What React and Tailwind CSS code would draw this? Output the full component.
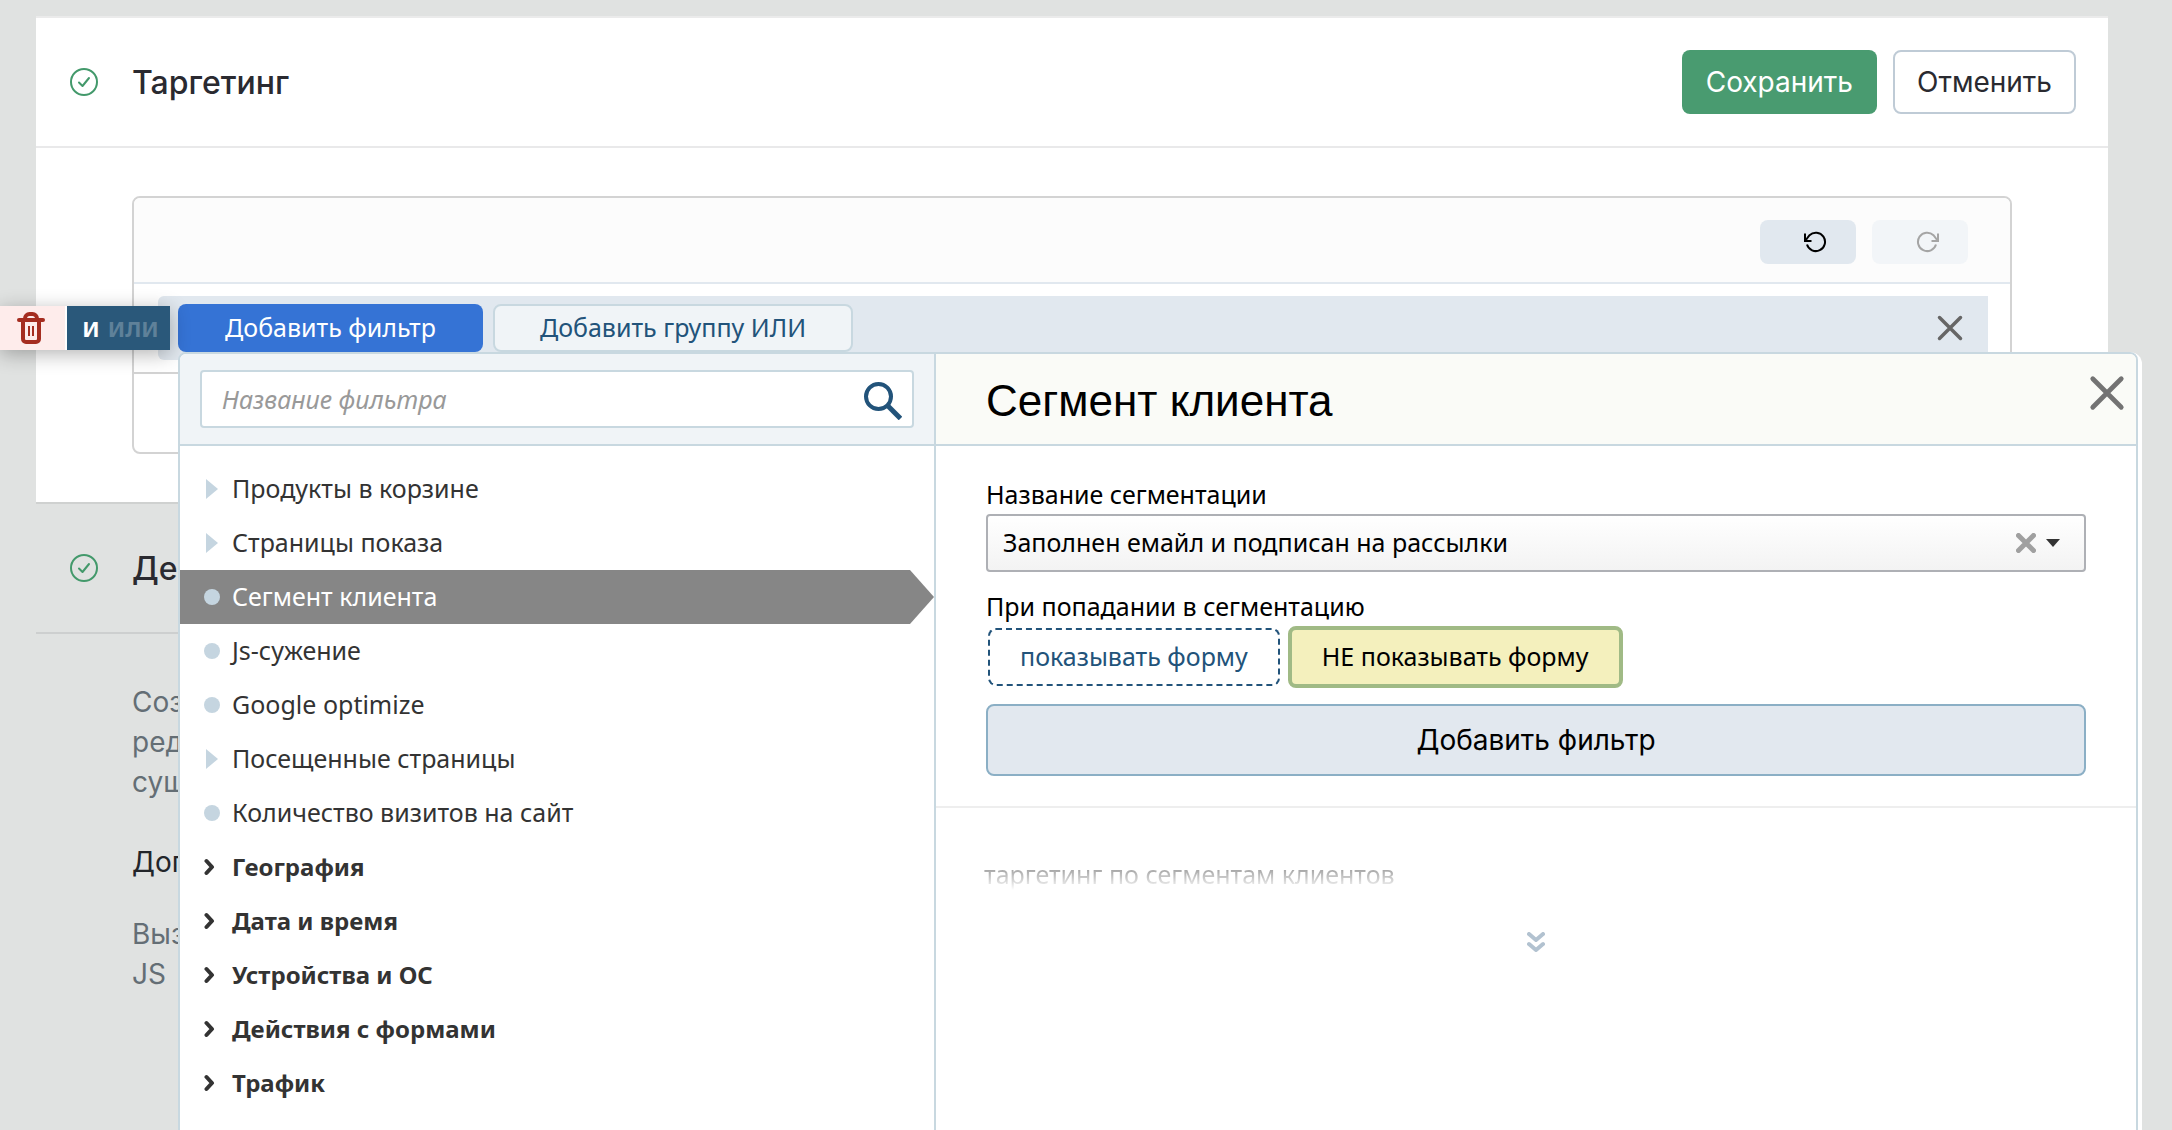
import React from "react";

const filters = [
  { name: "Продукты в корзине", type: "branch" },
  { name: "Страницы показа", type: "branch" },
  { name: "Сегмент клиента", type: "leaf", active: true },
  { name: "Js-сужение", type: "leaf" },
  { name: "Google optimize", type: "leaf" },
  { name: "Посещенные страницы", type: "branch" },
  { name: "Количество визитов на сайт", type: "leaf" },
  { name: "География", type: "group" },
  { name: "Дата и время", type: "group" },
  { name: "Устройства и ОС", type: "group" },
  { name: "Действия с формами", type: "group" },
  { name: "Трафик", type: "group" },
];

const CheckIcon = () => (
  <svg width="28" height="28" viewBox="0 0 28 28" fill="none" stroke="#43996b" strokeWidth="2" strokeLinecap="round" strokeLinejoin="round">
    <circle cx="14" cy="14" r="13" />
    <path d="M9 14.500l3.500 3.500L19 10" />
  </svg>
);

const TrashIcon = () => (
  <svg width="28" height="32" viewBox="0 0 28 32" fill="none" stroke="#a52d20" strokeWidth="4" strokeLinejoin="round">
    <path d="M8 8V6.500A4.500 4.500 0 0 1 12.500 2h3A4.500 4.500 0 0 1 20 6.500V8" />
    <path d="M2 8h24" strokeLinecap="round" />
    <path d="M6 8v19a3 3 0 0 0 3 3h10a3 3 0 0 0 3-3V8" />
    <path d="M12 14v10M16 14v10" strokeWidth="2" />
  </svg>
);

const UndoIcon = () => (
  <svg width="23" height="22" viewBox="0 0 23 22" fill="none" stroke="currentColor" strokeWidth="2">
    <path d="M3 13.500A9.200 9.200 0 1 0 5.500 4.200L1.500 9.500" />
    <path d="M1 2.500v7.500h6.500" />
  </svg>
);

const SearchIcon = () => (
  <svg width="38" height="38" viewBox="0 0 38 38" fill="none" stroke="#22537a" strokeWidth="4">
    <circle cx="14.500" cy="14.500" r="12.500" />
    <path d="M24 24l12.500 12.500" strokeWidth="5" />
  </svg>
);

const CloseIcon = ({ size, width }) => (
  <svg width={size} height={size} viewBox="0 0 24 24" fill="none" stroke="currentColor" strokeWidth={width} strokeLinecap="round">
    <path d="M3 3l18 18M21 3L3 21" />
  </svg>
);

const Marker = ({ type }) => {
  if (type === "branch") {
    return (
      <svg width="16" height="20" viewBox="0 0 16 20" fill="#c5d5e0">
        <path d="M2 0l12 10L2 20z" />
      </svg>
    );
  }
  if (type === "leaf") {
    return <span className="size-4 rounded-full bg-[#c5d5e0]" />;
  }
  return (
    <svg width="16" height="18" viewBox="0 0 16 18" fill="none" stroke="#333333" strokeWidth="4" strokeLinecap="round" strokeLinejoin="round">
      <path d="M2.500 3L8 9l-5.500 6" />
    </svg>
  );
};

const FilterList = () => (
  <ul className="pt-4 pb-10 text-[#333333]">
    {filters.map((f) => (
      <li key={f.name}>
        <button
          type="button"
          className={
            f.active
              ? "flex h-[54px] w-full items-center gap-3 bg-[#868686] pl-6 text-white [clip-path:polygon(0_0,calc(100%-24px)_0,100%_50%,calc(100%-24px)_100%,0_100%)]"
              : "flex h-[54px] w-full items-center gap-3 pl-6"
          }
        >
          <Marker type={f.type} />
          <span className={f.type === "group" ? "text-[24px] font-bold" : "text-[25px]"}>{f.name}</span>
        </button>
      </li>
    ))}
  </ul>
);

const SegmentForm = () => (
  <>
    <div className="border-b-2 border-[#eeeeee] px-[50px] pt-7 pb-[30px] text-black">
      <label htmlFor="segment" className="block leading-10">Название сегментации</label>
      <div className="relative">
        <select
          id="segment"
          className="h-[58px] w-full appearance-none rounded border-2 border-[#aeb0b5] bg-linear-to-b from-white to-[#f3f3f3] pr-24 pl-[15px]"
        >
          <option>Заполнен емайл и подписан на рассылки</option>
        </select>
        <div className="pointer-events-none absolute inset-y-0 right-[26px] flex items-center gap-2.5">
          <button type="button" aria-label="Очистить" className="pointer-events-auto text-[#a0a0a0]">
            <CloseIcon size={20} width={6} />
          </button>
          <svg width="14" height="8" viewBox="0 0 14 8" fill="#333333"><path d="M0 0h14L7 8z" /></svg>
        </div>
      </div>

      <p className="mt-3.5 leading-10">При попадании в сегментацию</p>
      <div className="flex items-center gap-2 pl-0.5">
        <button type="button" className="h-[58px] rounded-lg border-2 border-dashed border-[#22537a] px-[30px] text-[#22537a]">
          показывать форму
        </button>
        <button type="button" className="h-[62px] rounded-lg border-4 border-[#a0ba85] bg-[#f4f0bd] px-[30px]">
          НЕ показывать форму
        </button>
      </div>

      <button type="button" className="mt-4 h-[72px] w-full rounded-lg border-2 border-[#8bafc5] bg-[#e2e8ef] font-['Inter',sans-serif] text-[28px]">
        Добавить фильтр
      </button>
    </div>

    <div className="px-12 pt-[46px]">
      <p className="bg-linear-to-b from-[#888888] from-20% to-white to-90% bg-clip-text leading-10 text-transparent">
        таргетинг по сегментам клиентов
      </p>
    </div>
    <button type="button" aria-label="Развернуть" className="mx-auto mt-[38px] block">
      <svg width="18" height="20" viewBox="0 0 18 20" fill="none" stroke="#b2c2d0" strokeWidth="4" strokeLinecap="round" strokeLinejoin="round">
        <path d="M2 2l7 6 7-6M2 12l7 6 7-6" />
      </svg>
    </button>
  </>
);

const FilterPopup = () => (
  <div className="absolute top-14 -right-[154px] left-5 z-20 rounded-t-xl bg-white pr-1">
    <div className="grid grid-cols-[756px_1fr] overflow-hidden rounded-t-lg border-2 border-[#c8d8e0]">
      <div className="border-r-2 border-[#c8d8e0]">
        <div className="h-[92px] border-b-2 border-[#c8d8e0] bg-[#f0f4f7] px-5 pt-4">
          <div className="relative">
            <input
              type="text"
              aria-label="Название фильтра"
              placeholder="Название фильтра"
              className="h-[58px] w-full rounded border-2 border-[#c8d8e0] bg-white pr-16 pl-5 placeholder:text-[#999999] placeholder:italic"
            />
            <button type="button" aria-label="Найти" className="absolute top-3 right-3">
              <SearchIcon />
            </button>
          </div>
        </div>
        <FilterList />
      </div>

      <div>
        <div className="flex h-[92px] items-center justify-between border-b-2 border-[#c8d8e0] bg-[#fafbf7] pr-2.5 pl-[50px]">
          <h3 className="pt-1 font-['Liberation_Sans',sans-serif] text-[44px] text-black">Сегмент клиента</h3>
          <button type="button" aria-label="Закрыть" className="mb-3 text-[#737373]">
            <CloseIcon size={38} width={3} />
          </button>
        </div>
        <SegmentForm />
      </div>
    </div>
  </div>
);

const FilterRow = () => (
  <div className="relative flex h-16 items-center gap-2.5 rounded-l-md bg-[#e1e8ef] pr-6 pl-5">
    {/* row tools, hang out to the left of the row */}
    <div className="absolute top-2.5 right-full z-10 -mr-3 flex h-11 w-[170px] gap-0.5 bg-white shadow-[0_4px_20px_rgba(0,0,0,0.3)]">
      <button type="button" aria-label="Удалить" className="flex w-[65px] items-center bg-[#feeceb] pl-[17px]">
        <TrashIcon />
      </button>
      <button type="button" className="flex flex-1 items-center justify-center gap-2 bg-[#2a587a] pl-1 text-[22px] font-bold text-white">
        И <span className="text-[#5f8199]">ИЛИ</span>
      </button>
    </div>

    <button type="button" className="h-12 w-[305px] rounded-lg bg-[#3573d5] text-white">Добавить фильтр</button>
    <button type="button" className="h-12 w-[360px] rounded-lg border-2 border-[#c8d8e0] bg-[#f0f4f7] text-[#22537a]">
      Добавить группу ИЛИ
    </button>
    <button type="button" aria-label="Удалить группу" className="ml-auto text-[#666666]">
      <CloseIcon size={28} width={3} />
    </button>
    <FilterPopup />
  </div>
);

const SectionHeader = ({ title, children }) => (
  <header className="flex h-[130px] items-center border-b-2 border-current/10 pr-8 pl-[34px]">
    <CheckIcon />
    <h2 className="ml-[34px] pt-0.5 text-[32px] font-medium">{title}</h2>
    <div className="ml-auto flex gap-4">{children}</div>
  </header>
);

export default function App() {
  return (
    <main className="h-screen overflow-hidden bg-[#e0e2e1] pt-4 pr-16 pl-9 font-['Inter',sans-serif] text-[28px] text-[#2a2a30]">
      <section className="border-t-2 border-b-2 border-t-[#ebebeb] border-b-[#cfd1d0] bg-white">
        <SectionHeader title="Таргетинг">
          <button type="button" className="h-16 rounded-lg bg-[#499b70] px-6 text-white">Сохранить</button>
          <button type="button" className="h-16 rounded-lg border-2 border-[#bfcbd6] bg-white px-[22px]">Отменить</button>
        </SectionHeader>

        <div className="px-24 py-12">
          <div className="rounded-lg border-2 border-[#d3d3d3]">
            <div className="flex h-[86px] items-center justify-end gap-4 rounded-t-md border-b-2 border-[#e1e8ef] bg-[#fcfcfc] pt-1 pr-[42px]">
              <button type="button" aria-label="Отменить действие" className="flex h-11 w-24 items-center rounded-lg bg-[#e1e8ef] pl-11 text-black">
                <UndoIcon />
              </button>
              <button type="button" disabled aria-label="Повторить действие" className="flex h-11 w-24 items-center rounded-lg bg-[#f2f5f8] pl-11 text-[#a5a5a5]">
                <span className="-scale-x-100"><UndoIcon /></span>
              </button>
            </div>
            <div className="border-b-2 border-[#d3d3d3] py-3 pr-[22px] pl-6 font-['Noto_Sans',sans-serif] text-[25px]">
              <FilterRow />
            </div>
            <div className="h-[78px]" />
          </div>
        </div>
      </section>

      <section>
        <SectionHeader title="Действия" />
        <div className="pt-12 pl-24 leading-10 text-[#646e75]">
          <p>Создать,<br />редакт.<br />сущест.</p>
          <p className="mt-10 text-[#22252a]">Дополн.</p>
          <p className="mt-8">Вызов<br />JS</p>
        </div>
      </section>
    </main>
  );
}
